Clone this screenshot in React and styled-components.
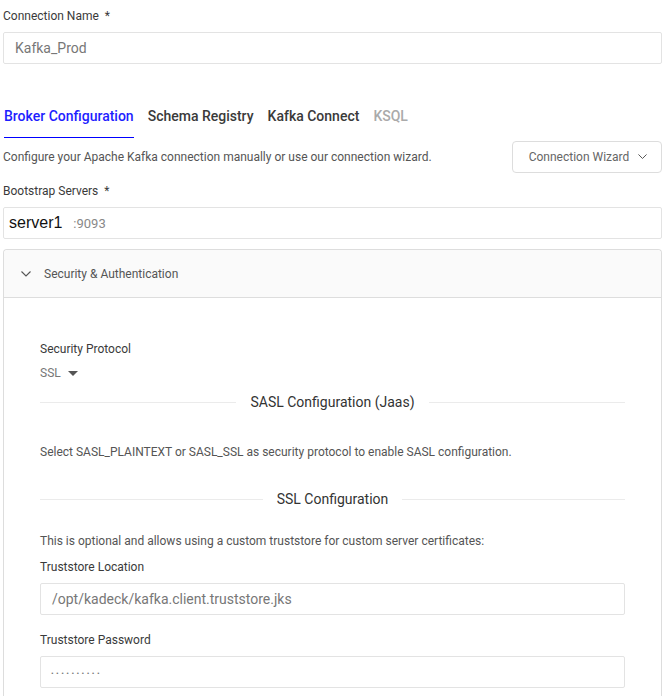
import React from 'react'
import styled, { createGlobalStyle } from 'styled-components'

const GlobalStyle = createGlobalStyle`
  body {
    margin: 0;
    background: #fff;
    font-family: Roboto, "Liberation Sans", Arial, sans-serif;
  }
`

const tabs = [
  { label: 'Broker Configuration', active: true },
  { label: 'Schema Registry' },
  { label: 'Kafka Connect' },
  { label: 'KSQL', disabled: true },
]

const Chevron = ({ size = 10 }) => (
  <svg width={size} height={size * 0.6} viewBox="0 0 10 6" fill="none">
    <path d="M0.5 0.5 L5 5 L9.5 0.5" stroke="#555" strokeWidth="1.1" />
  </svg>
)

const App = () => {
  return (
    <>
      <GlobalStyle />
      <Page>
        <Label>Connection Name<Req>*</Req></Label>
        <Field>Kafka_Prod</Field>

        <TabBar>
          {tabs.map(t => (
            <Tab key={t.label} $active={t.active} $disabled={t.disabled}>{t.label}</Tab>
          ))}
        </TabBar>

        <IntroRow>
          <Hint>Configure your Apache Kafka connection manually or use our connection wizard.</Hint>
          <WizardButton>
            Connection Wizard
            <Chevron size={9} />
          </WizardButton>
        </IntroRow>

        <Label $top={10}>Bootstrap Servers<Req>*</Req></Label>
        <Field $pad={5}>
          <ServerChip>server1</ServerChip>
          <Port>:9093</Port>
        </Field>

        <Accordion>
          <AccordionHeader>
            <Chevron size={10} />
            Security &amp; Authentication
          </AccordionHeader>
          <AccordionBody>
            <Label>Security Protocol</Label>
            <Select>
              SSL
              <Caret />
            </Select>

            <Divider $top={11}><span>SASL Configuration (Jaas)</span></Divider>
            <Hint $top={32}>Select SASL_PLAINTEXT or SASL_SSL as security protocol to enable SASL configuration.</Hint>

            <Divider $top={29}><span>SSL Configuration</span></Divider>
            <Hint $top={24}>This is optional and allows using a custom truststore for custom server certificates:</Hint>

            <Label $top={10}>Truststore Location</Label>
            <Field>/opt/kadeck/kafka.client.truststore.jks</Field>

            <Label $top={17}>Truststore Password</Label>
            <Field $pad={10}><Dots>••••••••••</Dots></Field>
          </AccordionBody>
        </Accordion>
      </Page>
    </>
  )
}

const Page = styled.div`
  padding: 8px 8px 0 3px;
  height: 696px;
  box-sizing: border-box;
  overflow: hidden;
`

const Label = styled.div`
  font-size: 12px;
  line-height: 16px;
  color: #3a3a3a;
  margin-top: ${p => p.$top || 0}px;
  margin-bottom: 8px;
`

const Req = styled.span`
  margin-left: 6px;
`

const Field = styled.div`
  height: 32px;
  box-sizing: border-box;
  border: 1px solid #e3e3e3;
  border-radius: 2px;
  display: flex;
  align-items: center;
  padding-left: ${p => p.$pad ?? 11}px;
  font-size: 14px;
  color: #777;
`

const TabBar = styled.div`
  display: flex;
  gap: 14px;
  margin-top: 42px;
  padding-left: 1px;
`

const Tab = styled.div`
  font-size: 14px;
  font-weight: 500;
  line-height: 20px;
  padding-bottom: 11px;
  color: ${p => p.$active ? '#1e1eff' : p.$disabled ? '#aaa' : '#3a3a3a'};
  border-bottom: 1px solid ${p => p.$active ? '#0000ff' : 'transparent'};
`

const IntroRow = styled.div`
  display: flex;
  justify-content: space-between;
  align-items: center;
  margin-top: 3px;
`

const Hint = styled.div`
  font-size: 12px;
  line-height: 16px;
  color: #555;
  margin-top: ${p => p.$top || 0}px;
`

const WizardButton = styled.div`
  width: 150px;
  height: 32px;
  box-sizing: border-box;
  border: 1px solid #ddd;
  border-radius: 4px;
  display: flex;
  align-items: center;
  justify-content: center;
  gap: 9px;
  font-size: 12px;
  color: #666;
  padding-left: 2px;
`

const ServerChip = styled.span`
  font-family: "Liberation Sans", Arial, sans-serif;
  font-size: 16px;
  color: #111;
`

const Port = styled.span`
  font-size: 13px;
  color: #888;
  margin-left: 11px;
`

const Accordion = styled.div`
  margin-top: 10px;
  border: 1px solid #ddd;
  border-bottom: none;
  border-radius: 4px 4px 0 0;
  height: 460px;
`

const AccordionHeader = styled.div`
  height: 47px;
  background: #fafafa;
  border-bottom: 1px solid #ddd;
  border-radius: 4px 4px 0 0;
  display: flex;
  align-items: center;
  gap: 13px;
  padding-left: 17px;
  font-size: 12px;
  color: #555;
`

const AccordionBody = styled.div`
  padding: 43px 36px 0 36px;
`

const Select = styled.div`
  display: flex;
  align-items: center;
  gap: 7px;
  font-size: 12px;
  line-height: 16px;
  color: #777;
  margin-top: 1px;
`

const Caret = styled.span`
  width: 0;
  height: 0;
  border-left: 5px solid transparent;
  border-right: 5px solid transparent;
  border-top: 5px solid #555;
`

const Divider = styled.div`
  display: flex;
  align-items: center;
  margin-top: ${p => p.$top || 0}px;
  font-size: 14px;
  line-height: 20px;
  color: #333;
  &::before, &::after {
    content: '';
    flex: 1;
    border-top: 1px solid #ebebeb;
  }
  span {
    margin: 0 14px;
  }
`

const Dots = styled.span`
  font-size: 8px;
  letter-spacing: 2.4px;
  color: #777;
  padding-top: 2px;
`

export default App
